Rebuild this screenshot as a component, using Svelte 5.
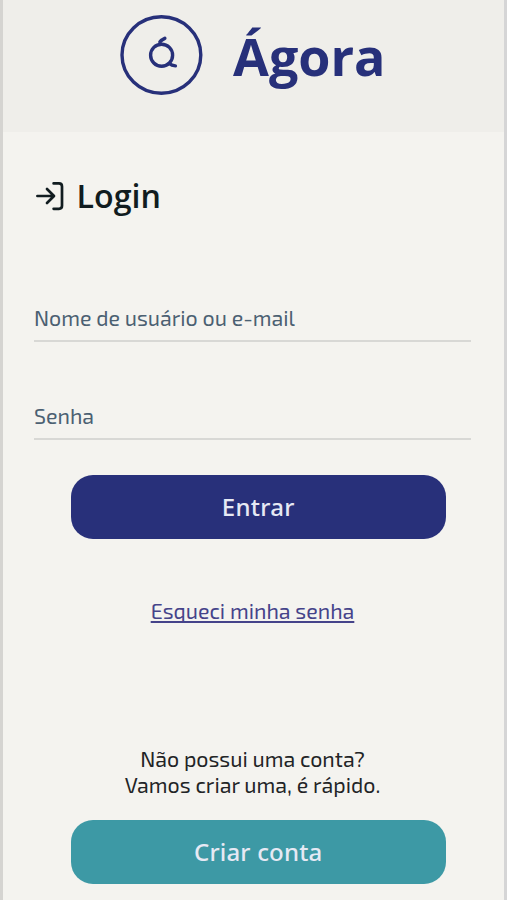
<script>
  let username = $state('');
  let password = $state('');
</script>

<div class="screen">
  <header>
    <svg class="logo" width="84" height="84" viewBox="0 0 84 84" fill="none" stroke="#27307a" stroke-linecap="round">
      <ellipse cx="42.4" cy="42" rx="39.4" ry="38.3" stroke-width="3.4" />
      <circle cx="42.6" cy="42.2" r="11" stroke-width="3.4" />
      <path d="M40.9 29c.9-1.5 2.4-2.6 4.9-3.7" stroke-width="3.5" />
      <path d="M50.2 50.6c1.8 1.6 3.6 2.2 6.2 2.3" stroke-width="3.4" />
    </svg>
    <h1>Ágora</h1>
  </header>

  <main>
    <h2>
      <svg width="28" height="30" viewBox="0 0 28 30" fill="none" stroke="#111c20" stroke-width="2.7" stroke-linecap="round" stroke-linejoin="round">
        <path d="M1.4 15H17.6M11 8L18 15L11 22" />
        <path d="M17.6 2.4H23Q26 2.4 26 5.4V24.8Q26 27.8 23 27.8H17.6" />
      </svg>
      <span>Login</span>
    </h2>

    <form onsubmit={(e) => e.preventDefault()}>
      <label class="field">
        {#if !username}<span class="user">Nome de usuário ou e-mail</span>{/if}
        <input type="text" bind:value={username} />
      </label>
      <label class="field second">
        {#if !password}<span class="pass">Senha</span>{/if}
        <input type="password" bind:value={password} />
      </label>
      <button class="primary" type="submit"><span>Entrar</span></button>
    </form>

    <a class="forgot" href="#recuperar"><span>Esqueci minha senha</span></a>

    <p class="invite">
      <span class="l1">Não possui uma conta?</span>
      <span class="l2">Vamos criar uma, é rápido.</span>
    </p>
    <button class="secondary" type="button"><span>Criar conta</span></button>
  </main>
</div>

<style>
  :global(body) {
    margin: 0;
    background: #f4f3ef;
  }
  .screen {
    box-sizing: border-box;
    width: 507px;
    height: 900px;
    overflow: hidden;
    border-left: 3px solid #d5d4d1;
    border-right: 3px solid #d5d5d6;
    background: #f4f3ef;
    font-family: "Exo 2", Roboto, sans-serif;
    font-size: 21.4px;
  }
  header {
    box-sizing: border-box;
    height: 132px;
    padding: 13px 0 0 116px;
    display: flex;
    align-items: flex-start;
    background: #efeeea;
  }
  h1 {
    margin: 0 0 0 30px;
    font: 700 52px/86px "Open Sans", sans-serif;
    color: #27307a;
  }
  main {
    display: flex;
    flex-direction: column;
  }
  h2 {
    display: flex;
    align-items: center;
    gap: 12.5px;
    height: 40px;
    margin: 44px 0 0 33px;
    font: 580 32.2px/40px "Open Sans", sans-serif;
    color: #111c20;
  }
  form {
    display: flex;
    flex-direction: column;
  }
  .field {
    box-sizing: border-box;
    display: grid;
    width: 437px;
    height: 42px;
    margin: 84px 0 0 31px;
    border-bottom: 2px solid #d8d8d5;
    color: #4b6072;
    line-height: 36px;
  }
  .field.second {
    margin-top: 56px;
  }
  .field span,
  .field input {
    grid-area: 1 / 1;
    white-space: nowrap;
  }
  input {
    width: 100%;
    padding: 0;
    border: 0;
    outline: 0;
    background: transparent;
    color: inherit;
    font: inherit;
  }
  button {
    width: 374.5px;
    height: 64px;
    margin: 0 0 0 68px;
    padding: 0;
    border: 0;
    border-radius: 22px;
    color: #e6e9f4;
    font: 500 24px/64px "Noto Sans", sans-serif;
  }
  .primary {
    margin-top: 35px;
    background: #28307a;
    letter-spacing: 0.3px;
  }
  .secondary {
    margin-top: 22.5px;
    background: #3d99a5;
    letter-spacing: 0.2px;
  }
  .forgot {
    align-self: center;
    margin: 57px 2px 0 0;
    color: #45438a;
    line-height: 30px;
    text-decoration-thickness: 1.5px;
    text-underline-offset: 1.5px;
    text-decoration-skip-ink: none;
  }
  .invite {
    display: flex;
    flex-direction: column;
    align-items: center;
    margin: 120px 2px 0 0;
    color: #222426;
    line-height: 25.5px;
  }
</style>
